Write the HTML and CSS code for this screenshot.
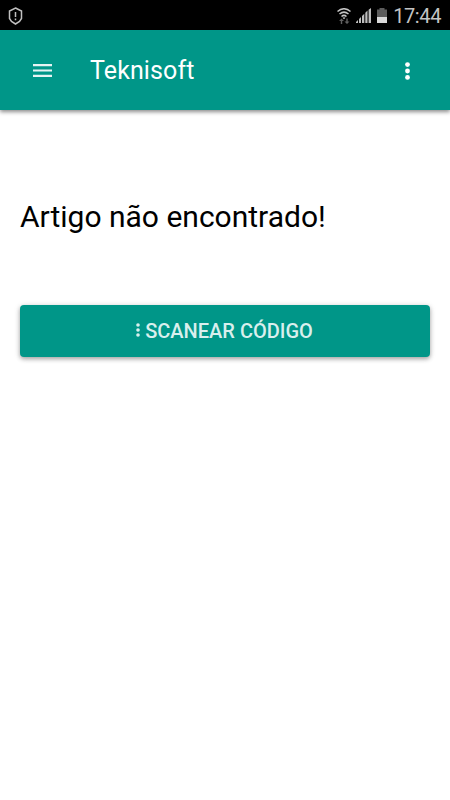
FILE: index.html
```html
<!DOCTYPE html>
<html lang="pt">
<head>
<meta charset="utf-8">
<title>Teknisoft</title>
<link rel="stylesheet" href="styles.css">
</head>
<body>
<div class="status">
  <svg class="shield" width="15" height="18" viewBox="0 0 15 18" fill="none" stroke="#c0c0c0" stroke-width="1.500"><path d="M7.500 1 13.500 4v7.500L11.500 14.500 7.500 17 3.500 14.500 1.500 11.500V4z"/><path d="M7.500 5v5M7.500 11.500v1.700"/></svg>
  <div class="system">
    <svg width="14" height="16" viewBox="0 0 14 16" fill="none" stroke="#c4c4c4" stroke-width="1.500"><path d="M.5 3.500q6.500-5.500 13 0M2.500 6q4.500-3.800 9 0M4.500 8.500q2.500-2.300 5 0"/><path fill="#c4c4c4" stroke="none" d="M5.500 9.800q1.500-1 3 0L7 11.300z"/><path fill="#606060" stroke="none" d="M2 13l2.500-2.500L7 13H5.200v3H3.800v-3zM7.500 13.500 10 16l2.500-2.500h-1.800v-3H9.300v3z"/></svg>
    <svg width="15" height="15" viewBox="0 0 15 15" fill="#bdbdbd"><path d="M0 15v-1l2-2v3zM3 15v-4l2-2v6zM6 15V8l2.300-2.300V15zM9.300 15V4.800l2.200-2.200V15zM12.600 15V1.800L15 0v15z"/></svg>
    <svg class="battery" width="10" height="15" viewBox="0 0 10 15"><path fill="#5c5c5c" d="M2.500 0h5v1.500H10V9H0V1.500h2.500z"/><path fill="#dadada" d="M0 9h10v6H0z"/></svg>
    <span class="time">17:44</span>
  </div>
</div>
<header class="toolbar">
  <svg class="menu" width="19" height="13" viewBox="0 0 19 13" fill="#e6f4f3"><path d="M0 0h19v2.200H0zM0 5.400h19v2.200H0zM0 10.800h19V13H0z"/></svg>
  <h1>Teknisoft</h1>
  <svg class="more" width="5" height="18" viewBox="0 0 5 18" fill="#fff"><circle cx="2.500" cy="2.600" r="2.400"/><circle cx="2.500" cy="9" r="2.400"/><circle cx="2.500" cy="15.400" r="2.400"/></svg>
</header>
<main>
  <h2>Artigo não encontrado!</h2>
  <button class="scan"><svg width="4" height="14" viewBox="0 0 4 14" fill="#d9efed"><circle cx="2" cy="2" r="1.800"/><circle cx="2" cy="7" r="1.800"/><circle cx="2" cy="12" r="1.800"/></svg><span>SCANEAR CÓDIGO</span></button>
</main>
</body>
</html>
```
FILE: styles.css
```css
* { box-sizing: border-box; }
body { margin: 0; min-height: 800px; background: #fff; font-family: Roboto, sans-serif; }
.status { height: 30px; background: #000; display: flex; align-items: center; justify-content: space-between; padding: 1px 9px 0 8px; }
.system { display: flex; align-items: center; gap: 5px; }
.battery { margin: 0 1px; }
.time { color: #c4c4c4; font-size: 20px; line-height: 27px; padding-top: 2px; letter-spacing: -.4px; }
.toolbar { height: 80px; background: #009688; display: flex; align-items: center; padding: 1px 40px 0 33px; color: #fff; box-shadow: 0 2px 4px rgba(0,0,0,.45); }
h1 { margin: -1px 0 0 38px; font-size: 25px; font-weight: 400; letter-spacing: .1px; }
.more { margin-left: auto; }
main { padding: 88px 20px 0; }
h2 { margin: 0 0 69px; font-size: 30px; line-height: 38px; font-weight: 400; color: #000; white-space: nowrap; }
.scan { width: 100%; height: 52px; border: 0; border-radius: 4px; background: #009688; color: #d9efed; font: 500 20px/52px Roboto, sans-serif; display: flex; align-items: center; justify-content: center; gap: 5px; padding: 0 1px 0 0; box-shadow: 0 2px 4px rgba(0,0,0,.3), 0 1px 7px rgba(0,0,0,.12); }
.scan svg { margin-top: -2px; }
```
